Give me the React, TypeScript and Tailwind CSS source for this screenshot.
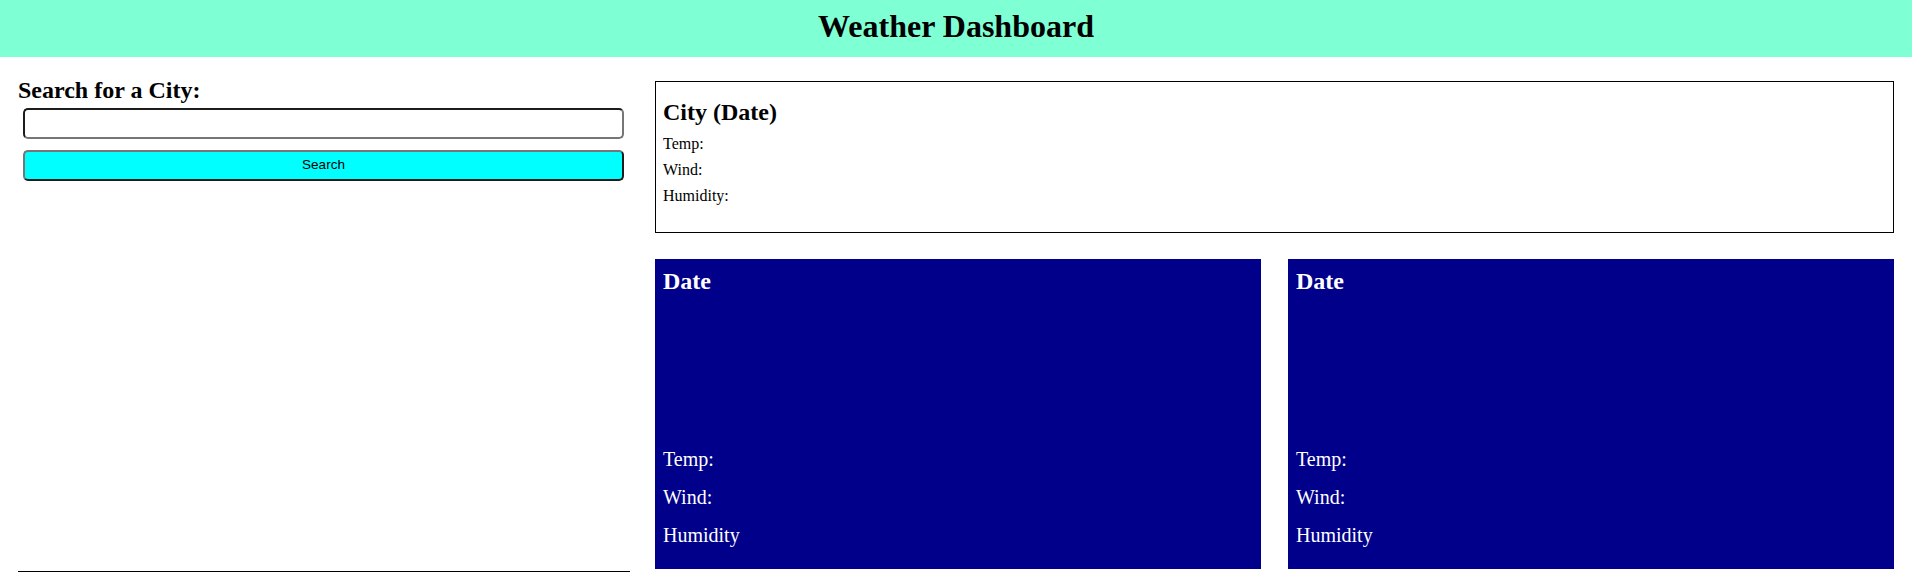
import React from "react";

const serif = { fontFamily: '"Liberation Serif", "Times New Roman", serif' };

function ForecastCard() {
  return (
    <div className="h-[310px] bg-[#00008b] text-white flex flex-col px-[8px] pt-[8px] pb-[15px]">
      <h3 className="text-2xl font-bold leading-[28px]">Date</h3>
      <div className="mt-auto text-[20px] leading-[38px]">
        <p>Temp:</p>
        <p>Wind:</p>
        <p>Humidity</p>
      </div>
    </div>
  );
}

export default function App() {
  return (
    <div className="min-h-screen bg-white text-black" style={serif}>
      {/* Page header */}
      <header className="h-[57px] bg-[#7fffd4] flex items-center justify-center pb-[5px]">
        <h1 className="text-[32px] font-bold leading-[36px]">Weather Dashboard</h1>
      </header>

      <main className="flex gap-[25px] px-[18px] pt-[19px]">
        {/* Search column */}
        <aside className="w-[612px] shrink-0 border-b border-black flex flex-col">
          <h2 className="text-2xl font-bold leading-[28px]">Search for a City:</h2>
          <input
            type="text"
            className="mt-[4px] ml-[5px] mr-[6px] h-[31px] rounded-[5px] border-2 border-t-[#1c1c1c] border-l-[#1c1c1c] border-b-[#767676] border-r-[#767676] bg-white px-2 outline-none"
          />
          <button
            className="mt-[11px] ml-[5px] mr-[6px] h-[31px] rounded-[5px] border-2 border-t-[#767676] border-l-[#767676] border-b-[#1c1c1c] border-r-[#1c1c1c] bg-[#00ffff] text-[13.5px] text-black"
            style={{ fontFamily: '"Liberation Sans", Arial, sans-serif' }}
          >
            Search
          </button>
        </aside>

        {/* Results column */}
        <section className="flex-1 flex flex-col pb-[3px]">
          <div className="mt-[5px] h-[152px] border border-black px-[7px] pt-[16px]">
            <h2 className="text-2xl font-bold leading-[28px] mb-[5px]">City (Date)</h2>
            <p className="text-base leading-[26px]">Temp:</p>
            <p className="text-base leading-[26px]">Wind:</p>
            <p className="text-base leading-[26px]">Humidity:</p>
          </div>

          <div className="mt-[26px] grid grid-cols-2 gap-[27px]">
            <ForecastCard />
            <ForecastCard />
          </div>
        </section>
      </main>
    </div>
  );
}
